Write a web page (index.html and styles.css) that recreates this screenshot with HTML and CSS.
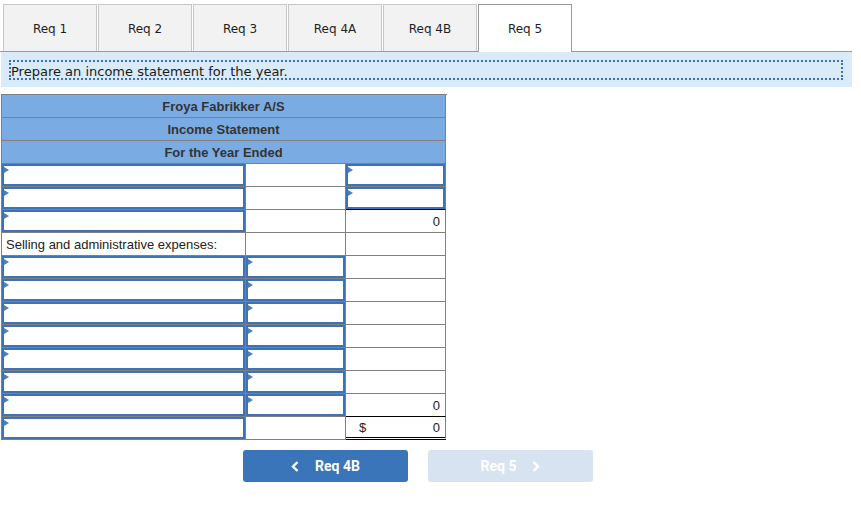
FILE: index.html
```html
<!DOCTYPE html>
<html lang="en">
<head>
<meta charset="utf-8">
<title>Req 5</title>
<link rel="stylesheet" href="styles.css">
</head>
<body>
<div class="page">
  <div class="tabs">
    <div class="tab">Req 1</div>
    <div class="tab">Req 2</div>
    <div class="tab">Req 3</div>
    <div class="tab">Req 4A</div>
    <div class="tab">Req 4B</div>
    <div class="tab active">Req 5</div>
  </div>
  <div class="bar"><div class="instr">Prepare an income statement for the year.</div></div>

  <div class="stmt">
    <div class="hd">Froya Fabrikker A/S</div>
    <div class="hd">Income Statement</div>
    <div class="hd">For the Year Ended</div>

    <div class="c"><span class="field"></span></div><div class="c"></div><div class="c"><span class="field"></span></div>
    <div class="c"><span class="field"></span></div><div class="c"></div><div class="c ul"><span class="field"></span></div>
    <div class="c"><span class="field"></span></div><div class="c"></div><div class="c num">0</div>

    <div class="c lbl">Selling and administrative expenses:</div><div class="c"></div><div class="c"></div>

    <div class="c"><span class="field"></span></div><div class="c"><span class="field"></span></div><div class="c"></div>
    <div class="c"><span class="field"></span></div><div class="c"><span class="field"></span></div><div class="c"></div>
    <div class="c"><span class="field"></span></div><div class="c"><span class="field"></span></div><div class="c"></div>
    <div class="c"><span class="field"></span></div><div class="c"><span class="field"></span></div><div class="c"></div>
    <div class="c"><span class="field"></span></div><div class="c"><span class="field"></span></div><div class="c"></div>
    <div class="c"><span class="field"></span></div><div class="c"><span class="field"></span></div><div class="c"></div>
    <div class="c"><span class="field"></span></div><div class="c"><span class="field"></span></div><div class="c num ul">0</div>

    <div class="c"><span class="field"></span></div><div class="c"></div><div class="c num cur dbl"><span>$</span><span>0</span></div>
  </div>

  <div class="nav">
    <button class="btn prev" type="button">
      <svg class="chev" width="8" height="11" viewBox="0 0 8 11"><path d="M6.5 1 L2 5.5 L6.5 10" fill="none" stroke="#fff" stroke-width="2.4"/></svg>
      <span>Req 4B</span>
    </button>
    <button class="btn next" type="button" disabled>
      <span>Req 5</span>
      <svg class="chev" width="8" height="11" viewBox="0 0 8 11"><path d="M1.5 1 L6 5.5 L1.5 10" fill="none" stroke="#fff" stroke-width="2.4"/></svg>
    </button>
  </div>
</div>
</body>
</html>
```

FILE: styles.css
```css
body {
  margin: 0;
  background: #fff;
}

.page {
  width: 852px;
  padding-top: 4px;
}

.tabs {
  display: flex;
  align-items: flex-start;
  gap: 1px;
  padding-left: 3px;
  height: 47px;
  border-bottom: 1px solid #9a9a9a;
}

.tab {
  box-sizing: border-box;
  width: 94px;
  height: 47px;
  padding-top: 2px;
  background: #f2f2f2;
  border: 1px solid #c8c8c8;
  border-bottom: none;
  display: flex;
  align-items: center;
  justify-content: center;
  font: 12px "DejaVu Sans", sans-serif;
  color: #1e1e1e;
}

.tab.active {
  background: #fff;
  border-color: #9a9a9a;
  height: 48px;
  padding-bottom: 1px;
  position: relative;
}

.bar {
  box-sizing: border-box;
  margin-left: 1px;
  height: 35px;
  background: #d9eaf8;
  padding: 8px 9px 0 8px;
}

.instr {
  box-sizing: border-box;
  height: 20px;
  border: 2px dotted #3a70b5;
  font: 13px "DejaVu Sans", sans-serif;
  line-height: 15px;
  padding-top: 2px;
  color: #1a1a1a;
}

.stmt {
  display: grid;
  grid-template-columns: 244px 100px 100px;
  width: 445px;
  margin: 7px 0 0 1px;
  border-left: 1px solid #808080;
  border-top: 1px solid #808080;
  font: 13px "Liberation Sans", Arial, sans-serif;
  color: #222;
}

.stmt > div {
  box-sizing: border-box;
  height: 23px;
  border-right: 1px solid #808080;
  border-bottom: 1px solid #808080;
  background: #fff;
}

.stmt > .hd {
  grid-column: 1 / -1;
  background: #7aace3;
  font-weight: bold;
  text-align: center;
  color: #333;
  padding-top: 2px;
  line-height: 20px;
}

.field {
  display: block;
  box-sizing: border-box;
  height: 100%;
  border: 2px solid #3d72b6;
  position: relative;
}

.field::before {
  content: "";
  position: absolute;
  left: 0;
  top: 1px;
  border-left: 5px solid #4a7fc0;
  border-top: 3px solid transparent;
  border-bottom: 3px solid transparent;
}

.num {
  text-align: right;
  padding-right: 5px;
  padding-top: 2px;
  line-height: 20px;
}

.cur {
  display: flex;
  justify-content: space-between;
  padding-left: 13px;
}

.lbl {
  padding-left: 4px;
  padding-top: 2px;
  line-height: 20px;
}

.stmt > .ul {
  border-bottom-color: #000;
}

.stmt > .dbl {
  border-bottom: 3px double #000;
  line-height: 18px;
}

.nav {
  display: flex;
  gap: 20px;
  margin: 10px 0 0 243px;
}

.btn {
  box-sizing: border-box;
  width: 165px;
  height: 32px;
  border: none;
  border-radius: 3px;
  display: flex;
  align-items: center;
  justify-content: center;
  gap: 16px;
  font: bold 14px Roboto, "Liberation Sans", sans-serif;
  color: #fff;
  padding: 0;
}

.prev {
  background: #3a75ba;
}

.next {
  background: #d8e3f1;
}
```
